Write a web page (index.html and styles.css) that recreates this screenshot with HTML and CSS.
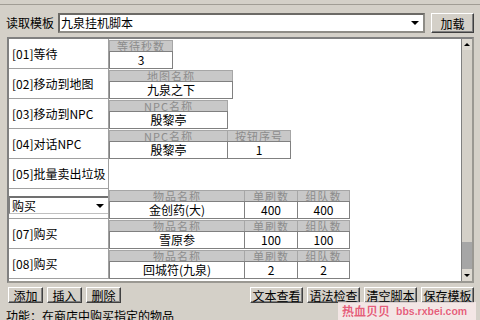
FILE: index.html
```html
<!DOCTYPE html>
<html lang="zh-CN">
<head>
<meta charset="utf-8">
<title>九泉挂机脚本</title>
<link rel="stylesheet" href="styles.css">
</head>
<body>
<div class="rule"></div>
<div class="toolbar">
  <span class="toolbar-label">读取模板</span>
  <div class="combo">
    <span class="combo-text">九泉挂机脚本</span>
    <span class="tri combo-arrow"></span>
  </div>
  <button class="btn btn-load">加载</button>
</div>

<div class="list">
  <div class="rows">
    <div class="row">
      <div class="label">[01]等待</div>
      <div class="fields">
        <div class="field w64"><div class="fh">等待秒数</div><div class="fv">3</div></div>
      </div>
    </div>
    <div class="row">
      <div class="label">[02]移动到地图</div>
      <div class="fields">
        <div class="field w124"><div class="fh">地图名称</div><div class="fv">九泉之下</div></div>
      </div>
    </div>
    <div class="row">
      <div class="label">[03]移动到NPC</div>
      <div class="fields">
        <div class="field w119"><div class="fh">NPC名称</div><div class="fv">殷黎亭</div></div>
      </div>
    </div>
    <div class="row">
      <div class="label">[04]对话NPC</div>
      <div class="fields">
        <div class="field w119"><div class="fh">NPC名称</div><div class="fv">殷黎亭</div></div>
        <div class="field w64"><div class="fh">按钮序号</div><div class="fv">1</div></div>
      </div>
    </div>
    <div class="row">
      <div class="label">[05]批量卖出垃圾</div>
      <div class="fields"></div>
    </div>
    <div class="row">
      <div class="label label-select">
        <div class="select">
          <span>购买</span>
          <span class="tri select-arrow"></span>
        </div>
      </div>
      <div class="fields">
        <div class="field w136"><div class="fh">物品名称</div><div class="fv">金创药(大)</div></div>
        <div class="field w54"><div class="fh">单刷数</div><div class="fv">400</div></div>
        <div class="field w53"><div class="fh">组队数</div><div class="fv">400</div></div>
      </div>
    </div>
    <div class="row">
      <div class="label">[07]购买</div>
      <div class="fields">
        <div class="field w136"><div class="fh">物品名称</div><div class="fv">雪原参</div></div>
        <div class="field w54"><div class="fh">单刷数</div><div class="fv">100</div></div>
        <div class="field w53"><div class="fh">组队数</div><div class="fv">100</div></div>
      </div>
    </div>
    <div class="row">
      <div class="label">[08]购买</div>
      <div class="fields">
        <div class="field w136"><div class="fh">物品名称</div><div class="fv">回城符(九泉)</div></div>
        <div class="field w54"><div class="fh">单刷数</div><div class="fv">2</div></div>
        <div class="field w53"><div class="fh">组队数</div><div class="fv">2</div></div>
      </div>
    </div>
  </div>
  <div class="scrollbar">
    <div class="sb-btn"><span class="tri tri-up"></span></div>
    <div class="sb-track"></div>
    <div class="sb-thumb"></div>
    <div class="sb-btn sb-down"><span class="tri tri-down"></span></div>
  </div>
</div>

<div class="actions">
  <button class="btn btn-s">添加</button>
  <button class="btn btn-s">插入</button>
  <button class="btn btn-s">删除</button>
  <div class="actions-right">
    <button class="btn btn-m">文本查看</button>
    <button class="btn btn-m">语法检查</button>
    <button class="btn btn-m">清空脚本</button>
    <button class="btn btn-m">保存模板</button>
  </div>
</div>
<div class="status">功能：在商店中购买指定的物品</div>

<div class="watermark"><span class="wm-cn">热血贝贝</span><span class="wm-en">bbs.rxbei.com</span></div>
</body>
</html>
```

FILE: styles.css
```css
* { box-sizing: border-box; }

body {
  margin: 0;
  width: 480px;
  height: 320px;
  overflow: hidden;
  position: relative;
  background: #d4d0c8;
  color: #000;
  font: 12px "Noto Sans CJK SC", sans-serif;
}

.rule {
  height: 5px;
  border-bottom: 1px solid #a19d95;
}

.toolbar {
  display: flex;
  align-items: center;
  height: 20px;
  margin-top: 8px;
  padding-left: 6px;
}

.toolbar-label {
  width: 52px;
  line-height: 14px;
}

.combo {
  position: relative;
  width: 367px;
  height: 20px;
  background: #fff;
  border: 2px solid #8e8c86;
  border-top-color: #6c6a66;
  border-left-color: #6c6a66;
  display: flex;
  align-items: center;
  padding-left: 1px;
  line-height: 14px;
}

.combo-text { flex: 1; }

.tri {
  display: block;
  width: 0;
  height: 0;
  border-left: 4px solid transparent;
  border-right: 4px solid transparent;
  border-top: 4px solid #000;
}

.combo-arrow { margin-right: 4px; }

.btn {
  margin: 0;
  padding: 0;
  font: 12px "Noto Sans CJK SC", sans-serif;
  color: #000;
  background: #d4d0c8;
  border: 1px solid;
  border-color: #ffffff #404040 #404040 #ffffff;
  box-shadow: inset -1px -1px #808080;
  line-height: 13px;
  text-align: center;
}

.btn-load {
  margin-left: 6px;
  width: 43px;
  height: 20px;
}

.list {
  display: flex;
  margin: 4px 0 0 7px;
  width: 467px;
  height: 246px;
  background: #fff;
  border: 2px solid;
  border-color: #808080 #9a9892 #9a9892 #808080;
}

.rows {
  flex: 1;
  display: flex;
  flex-direction: column;
}

.row {
  display: flex;
  height: 30px;
}

.label {
  width: 100px;
  height: 30px;
  border-right: 1px solid #a0a0a0;
  border-bottom: 1px solid #a0a0a0;
  display: flex;
  align-items: center;
  padding-left: 3px;
  white-space: nowrap;
  line-height: 14px;
}

.label-select {
  align-items: flex-start;
  padding: 7px 0 0 0;
}

.select {
  width: 99px;
  height: 18px;
  display: flex;
  align-items: center;
  justify-content: space-between;
  padding: 0 4px 0 2px;
  border-top: 2px solid #707070;
  border-left: 1px solid #808080;
  border-bottom: 1px solid #c0c0c0;
  line-height: 14px;
  background: #fff;
}

.fields {
  display: flex;
  padding-top: 1px;
}

.field {
  display: flex;
  flex-direction: column;
}

.field + .field { margin-left: -1px; }

.w64 { width: 64px; }
.w124 { width: 124px; }
.w119 { width: 119px; }
.w136 { width: 136px; }
.w54 { width: 54px; }
.w53 { width: 53px; }

.fh {
  height: 12px;
  background: #c8c8c8;
  border: 1px solid #a6a6a6;
  color: #8c8c8c;
  font-size: 11px;
  line-height: 10px;
  text-align: center;
  overflow: hidden;
  white-space: nowrap;
  letter-spacing: 1px;
}

.fv {
  height: 18px;
  margin-top: -1px;
  background: #fff;
  border: 1px solid #808080;
  line-height: 16px;
  text-align: center;
  white-space: nowrap;
}

.scrollbar {
  width: 11px;
  display: flex;
  flex-direction: column;
  background: #d4d0c8;
  border-left: 1px solid #808080;
}

.sb-btn {
  height: 11px;
  display: flex;
  align-items: center;
  justify-content: center;
  background: #dedad2;
}

.sb-down { height: 12px; }

.tri-up {
  border-left: 3px solid transparent;
  border-right: 3px solid transparent;
  border-top: 0;
  border-bottom: 3px solid #000;
}

.tri-down {
  border-left: 3px solid transparent;
  border-right: 3px solid transparent;
  border-top: 3px solid #000;
}

.sb-track { flex: 1; }

.sb-thumb {
  height: 27px;
  background: #a6a6a6;
}

.actions {
  display: flex;
  align-items: center;
  margin-top: 4px;
  height: 16px;
  padding: 0 6px 0 8px;
  gap: 4px;
}

.btn-s { width: 35px; height: 16px; }

.actions-right {
  margin-left: auto;
  display: flex;
  gap: 4px;
}

.btn-m { width: 53px; height: 16px; }

.status {
  margin-top: 6px;
  padding-left: 6px;
  line-height: 14px;
  white-space: nowrap;
}

.watermark {
  position: absolute;
  left: 338px;
  top: 302px;
  width: 138px;
  height: 18px;
  display: flex;
  align-items: center;
  gap: 6px;
  padding-left: 4px;
  background: rgba(248, 234, 234, 0.85);
  color: #e4607a;
  font-weight: bold;
  text-shadow: 0 0 1px #fff;
}

.wm-cn { font-size: 12px; line-height: 14px; }

.wm-en {
  font: bold 10.5px "Liberation Sans", sans-serif;
}
```
